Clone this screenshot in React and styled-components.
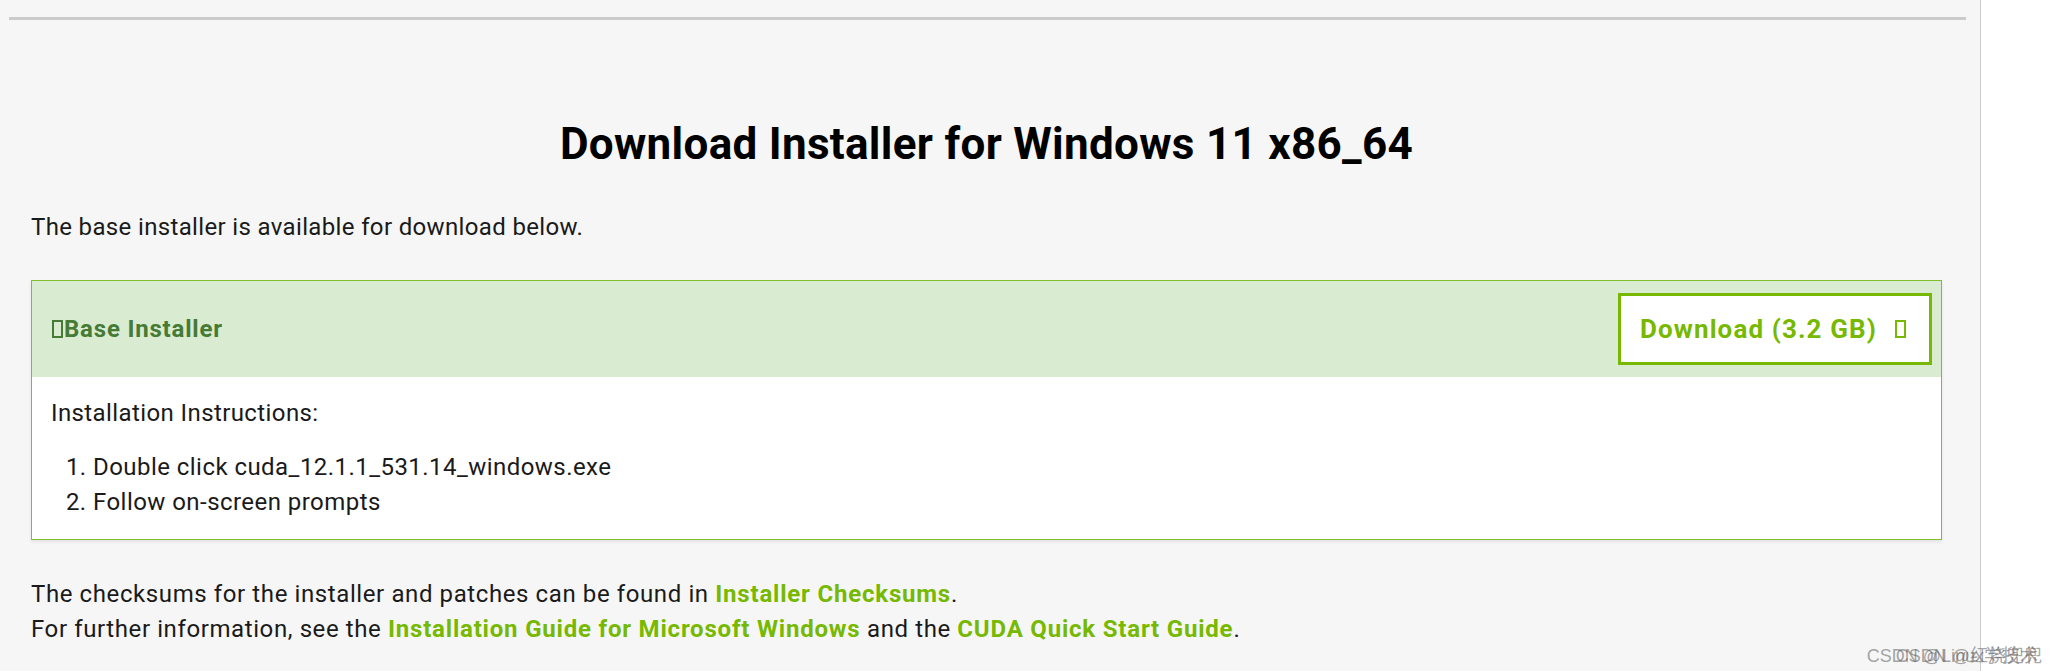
import React from "react";
import styled, { createGlobalStyle } from "styled-components";

const GlobalStyle = createGlobalStyle`
  html, body {
    margin: 0;
    padding: 0;
    background: #fff;
  }
  body {
    font-family: Roboto, "Liberation Sans", sans-serif;
    color: #1a1a1a;
  }
`;

const Page = styled.div`
  position: relative;
  width: 2054px;
  height: 671px;
  overflow: hidden;
  background: #fff;
`;

const Panel = styled.div`
  width: 1981px;
  height: 671px;
  padding: 17px 14px 0 9px;
  box-sizing: border-box;
  background: #f6f6f6;
  border-right: 1px solid #cccccc;
`;

const Rule = styled.hr`
  margin: 0;
  border: 0;
  height: 3px;
  background: #cbcbcb;
`;

const Content = styled.div`
  padding: 0 24px 0 22px;
`;

const Heading = styled.h1`
  margin: 98px 0 0;
  text-align: center;
  font-size: 44px;
  line-height: 52px;
  font-weight: 700;
  letter-spacing: 0.3px;
  color: #000;
`;

const Text = styled.p`
  margin: ${(p) => p.$mt || 0}px 0 0;
  font-size: 24px;
  letter-spacing: ${(p) => p.$ls || 0.4}px;
  line-height: ${(p) => p.$lh || 34}px;
  color: #1a1a1a;
`;

const Box = styled.div`
  margin-top: 36px;
  border: 1px solid #7fbf2e;
  background: #fff;
  box-shadow: 0 2px 3px rgba(0, 0, 0, 0.08);
`;

const BoxHeader = styled.div`
  height: 96px;
  display: flex;
  align-items: center;
  justify-content: space-between;
  padding: 0 9px 0 20px;
  background: #d9ecd2;
`;

const HeaderTitle = styled.div`
  display: flex;
  align-items: center;
  font-size: 24px;
  letter-spacing: 0.8px;
  font-weight: 700;
  color: #467a35;
`;

const Glyph = styled.span`
  display: inline-block;
  width: 7px;
  height: 14px;
  border: 2px solid ${(p) => p.$color};
  margin: ${(p) => p.$margin};
`;

const DownloadButton = styled.a`
  display: flex;
  align-items: center;
  gap: 18px;
  height: 66px;
  width: 270px;
  padding: 0 19px;
  border: 3px solid #76b900;
  background: #fff;
  color: #76b900;
  font-size: 26px;
  letter-spacing: 1.1px;
  font-weight: 700;
  text-decoration: none;
`;

const BoxBody = styled.div`
  padding: 19px;
`;

const Steps = styled.ol`
  margin: 20px 0 0;
  padding-left: 42px;
  font-size: 24px;
  letter-spacing: 0.45px;
  line-height: 35px;
`;

const Link = styled.a`
  color: #76b900;
  font-weight: 700;
  letter-spacing: 0.8px;
  text-decoration: none;
`;

const Watermark = styled.div`
  position: absolute;
  right: ${(p) => p.$right}px;
  bottom: 4px;
  font-family: "Liberation Sans", "Noto Sans CJK SC", sans-serif;
  font-size: 18px;
  color: rgba(90, 90, 90, 0.55);
  white-space: nowrap;
`;

export default function App() {
  return (
    <>
      <GlobalStyle />
      <Page>
        <Panel>
          <Rule />
          <Content>
            <Heading>Download Installer for Windows 11 x86_64</Heading>
            <Text $mt={40} $ls={0.35}>The base installer is available for download below.</Text>
            <Box>
              <BoxHeader>
                <HeaderTitle>
                  <Glyph $color="#467a35" $margin="0 1px 0 0" />
                  Base Installer
                </HeaderTitle>
                <DownloadButton href="#">
                  <span>Download (3.2 GB)</span>
                  <Glyph $color="#76b900" $margin="0" />
                </DownloadButton>
              </BoxHeader>
              <BoxBody>
                <Text>Installation Instructions:</Text>
                <Steps>
                  <li>Double click cuda_12.1.1_531.14_windows.exe</li>
                  <li>Follow on-screen prompts</li>
                </Steps>
              </BoxBody>
            </Box>
            <Text $mt={37} $lh={35} $ls={0.6}>
              The checksums for the installer and patches can be found in{" "}
              <Link href="#">Installer Checksums</Link>.
            </Text>
            <Text $lh={35} $ls={0.6}>
              For further information, see the{" "}
              <Link href="#">Installation Guide for Microsoft Windows</Link> and the{" "}
              <Link href="#">CUDA Quick Start Guide</Link>.
            </Text>
          </Content>
        </Panel>
        <Watermark $right={16}>CSDN @Linux学技术</Watermark>
        <Watermark $right={12}>CSDN @红烧兜兜</Watermark>
      </Page>
    </>
  );
}
